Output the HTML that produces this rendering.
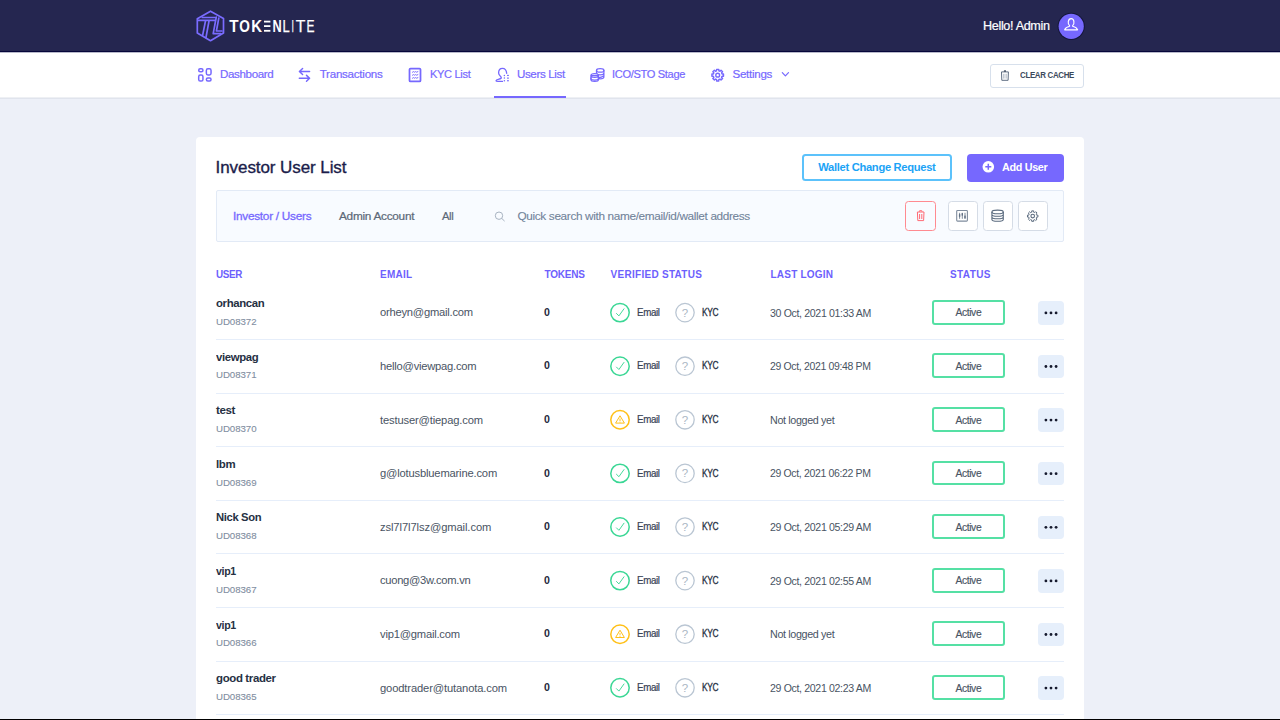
<!DOCTYPE html>
<html><head><meta charset="utf-8">
<style>
*{box-sizing:border-box;margin:0;padding:0}
html,body{width:1280px;height:720px;overflow:hidden}
body{font-family:"Liberation Sans",sans-serif;background:#edf0f8;position:relative}
.t{position:absolute;white-space:nowrap}
.b{position:absolute}
svg{position:absolute;overflow:visible}
</style></head>
<body>
<!-- topbar -->
<div class="b" style="left:0;top:0;width:1280px;height:51px;background:#252650"></div>
<div class="b" style="left:0;top:51px;width:1280px;height:1px;background:#06063a"></div>
<div class="b" style="left:0;top:52px;width:1280px;height:1px;background:#b9bacb"></div>
<!-- logo -->
<svg style="left:0;top:0" width="1280" height="52" viewBox="0 0 1280 52">
  <g fill="none" stroke="#7a6cff" stroke-width="1.7" stroke-linejoin="round" stroke-linecap="round">
    <path d="M210.5 11.2 L223.5 18.6 L223.5 33 L210.5 40.7 L197.3 33 L197.3 18.7 Z"/>
    <path d="M202.3 17.5 L215.2 17.5 M197.8 20.4 L215 20.4"/>
    <path d="M205.5 21 L202.6 35.4 M209 21 L206 37.4"/>
    <path d="M216.3 17 L213.2 33.6 L220.8 33.6 M218.8 18.2 L216.4 31 L222 31"/>
  </g>
  <g font-family="Liberation Sans" font-weight="700" font-size="16" fill="#fff">
    <text x="229.2" y="31.6" textLength="9.3" lengthAdjust="spacingAndGlyphs">T</text><text x="239.3" y="31.6" textLength="10.6" lengthAdjust="spacingAndGlyphs">O</text><text x="251.2" y="31.6" textLength="10.8" lengthAdjust="spacingAndGlyphs">K</text><text x="272.6" y="31.6" textLength="9.2" lengthAdjust="spacingAndGlyphs">N</text>
  </g>
  <g fill="#fff"><rect x="264" y="20.7" width="6.4" height="1.8"/><rect x="264" y="25.2" width="6.4" height="1.8"/><rect x="264" y="29.9" width="6.4" height="1.8"/></g>
  <g font-family="Liberation Sans" font-weight="400" font-size="16" fill="#fff" stroke="#fff" stroke-width="0.25">
    <text x="282.6" y="31.6" textLength="7.2" lengthAdjust="spacingAndGlyphs">L</text><text x="291.4" y="31.6" textLength="2.4" lengthAdjust="spacingAndGlyphs">I</text><text x="295.8" y="31.6" textLength="9.6" lengthAdjust="spacingAndGlyphs">T</text><text x="306.4" y="31.6" textLength="8" lengthAdjust="spacingAndGlyphs">E</text>
  </g>
  <!-- avatar -->
  <circle cx="1071.2" cy="26.3" r="13.6" fill="#14153c"/>
  <circle cx="1071.2" cy="26.3" r="12.6" fill="#7668fe"/>
  <g fill="none" stroke="#fff" stroke-width="1.15" stroke-linejoin="round">
    <path d="M1069.6 25.6 C1068.2 24.4 1068.1 22.8 1068.3 21.6 C1068.6 19.5 1069.8 18.6 1071.1 18.6 C1072.5 18.6 1073.7 19.5 1073.9 21.6 C1074.1 22.8 1074 24.4 1072.6 25.6 L1072.6 26.3 C1074.8 26.9 1076.9 27.8 1077.6 29.8 L1064.7 29.8 C1065.4 27.8 1067.4 26.9 1069.6 26.3 Z"/>
  </g>
</svg>
<!-- nav -->
<div class="b" style="left:0;top:53px;width:1280px;height:44px;background:#fff"></div>
<div class="b" style="left:0;top:97px;width:1280px;height:1px;background:#eef0f4"></div>
<div class="b" style="left:0;top:98px;width:1280px;height:1px;background:#e0e4ed"></div>
<div class="b" style="left:494px;top:95.8px;width:72px;height:2px;background:#7668fe"></div>
<svg style="left:0;top:0" width="1280" height="100" viewBox="0 0 1280 100">
  <g fill="none" stroke="#7668fe" stroke-width="1.75" stroke-linecap="round" stroke-linejoin="round">
    <!-- dashboard -->
    <g stroke-width="1.5">
    <rect x="198.7" y="68.85" width="4.25" height="3" rx="1.5"/>
    <rect x="206.35" y="68.85" width="4.7" height="6.1" rx="1.6"/>
    <rect x="198.7" y="75.05" width="4.25" height="6" rx="1.6"/>
    <rect x="206.35" y="78.05" width="4.7" height="3" rx="1.5"/>
    </g>
    <!-- transactions -->
    <g stroke-width="1.45">
    <path d="M309.6 71.55 L299.6 71.55 M302.6 68.5 L299.4 71.55 L302.6 74.6"/>
    <path d="M299.3 78.3 L309.4 78.3 M306.5 75.35 L309.6 78.3 L306.5 81.3"/>
    </g>
    <!-- kyc list -->
    <rect x="409.5" y="68.6" width="11" height="12.8" rx="1"/>
    <path d="M412.5 72.2 l1 -0.6 l1 0.6 l1 -0.6 l1.2 0.6 l1.2 -0.6" stroke-width="1"/>
    <path d="M412.5 75.2 l1 -0.6 l1 0.6 l1 -0.6 l1.2 0.6 l1.2 -0.6" stroke-width="1"/>
    <path d="M412.5 78.2 l1 -0.6 l1 0.6 l1 -0.6 l1.2 0.6 l1.2 -0.6" stroke-width="1"/>
    <!-- users list -->
    <path d="M506.7 73.3 C506.4 70.3 504.8 68.3 502.5 68.3 C499.8 68.3 498.6 70.8 498.6 73 C498.6 75 500.3 76.1 501.2 77.2 C501.8 78.3 500.5 78.7 499 79.1 C497.2 79.6 496 80.1 496 80.8 C496.1 81.3 497 81.4 498 81.4 L502.5 81.4" stroke-width="1.3"/>
    <g stroke="none" fill="#7668fe">
      <circle cx="504.4" cy="75.4" r="0.75"/><circle cx="504.4" cy="78.1" r="0.75"/><circle cx="504.4" cy="80.75" r="0.75"/>
      <rect x="507" y="74.85" width="1.9" height="1.1"/><rect x="507" y="77.55" width="1.9" height="1.1"/><rect x="507" y="80.2" width="1.9" height="1.1"/>
    </g>
    <!-- ICO coins -->
    <g stroke-width="1.25">
    <ellipse cx="600.2" cy="70.4" rx="3.7" ry="1.8"/>
    <path d="M596.5 70.4 L596.5 77 C596.5 78 598 78.8 600.2 78.8 C602.4 78.8 603.9 78 603.9 77 L603.9 70.4 M596.5 73.1 C596.5 74.1 598 74.9 600.2 74.9 C602.4 74.9 603.9 74.1 603.9 73.1 M598.5 77.6 C599.5 77.7 601 77.7 603.9 75.8"/>
    <path d="M590.9 75.5 L590.9 79.4 C590.9 80.5 592.5 81.3 594.7 81.3 C596.9 81.3 598.5 80.5 598.5 79.4 L598.5 75.5 C598.5 74.4 596.9 73.6 594.7 73.6 C592.5 73.6 590.9 74.4 590.9 75.5 C590.9 76.6 592.5 77.4 594.7 77.4 C596.9 77.4 598.5 76.6 598.5 75.5 Z" fill="#fff"/>
    <path d="M590.9 78.2 C590.9 79.2 592.5 80 594.7 80 C596.9 80 598.5 79.2 598.5 78.2"/>
    </g>
    <!-- settings gear -->
    <path d="M721.86 73.43 L722.06 74.03 L723.50 74.04 L723.50 76.26 L722.06 76.27 L721.86 76.87 L721.57 77.44 L722.58 78.47 L721.02 80.03 L719.99 79.02 L719.42 79.31 L718.82 79.51 L718.81 80.95 L716.59 80.95 L716.58 79.51 L715.98 79.31 L715.41 79.02 L714.38 80.03 L712.82 78.47 L713.83 77.44 L713.54 76.87 L713.34 76.27 L711.90 76.26 L711.90 74.04 L713.34 74.03 L713.54 73.43 L713.83 72.86 L712.82 71.83 L714.38 70.27 L715.41 71.28 L715.98 70.99 L716.58 70.79 L716.59 69.35 L718.81 69.35 L718.82 70.79 L719.42 70.99 L719.99 71.28 L721.02 70.27 L722.58 71.83 L721.57 72.86 Z" stroke-width="1.4"/>
    <circle cx="717.7" cy="75.15" r="1.9" stroke-width="1.4"/>
    <!-- chevron -->
    <path d="M782.3 72.6 L785.4 75.9 L788.5 72.6" stroke-width="1.2"/>
  </g>
</svg>
<!-- clear cache btn -->
<div class="b" style="left:990px;top:64px;width:94px;height:23.5px;border:1px solid #d7e0ec;border-radius:3px;background:#fff"></div>
<svg style="left:0;top:0" width="1280" height="100">
  <g fill="none" stroke="#5e6d82" stroke-width="1">
    <path d="M1001.5 71.9 L1008.4 71.9 L1008.1 80.3 L1001.8 80.3 Z" stroke-linejoin="round"/>
    <path d="M1003.9 71 L1006 71" stroke-width="1.2" stroke="#26334a"/>
    <path d="M1003.5 73.8 L1003.5 78.6 M1004.95 73.8 L1004.95 78.6 M1006.4 73.8 L1006.4 78.6" stroke="#9aa6b6" stroke-width="0.6"/>
  </g>
</svg>
<!-- card -->
<div class="b" style="left:196px;top:137px;width:888px;height:620px;background:#fff;border-radius:4px"></div>
<!-- wallet btn -->
<div class="b" style="left:802px;top:153.8px;width:150px;height:27.7px;border:2px solid #5cc2fb;border-radius:3.5px;background:#fff"></div>
<!-- add user btn -->
<div class="b" style="left:967px;top:153.5px;width:97px;height:28px;border-radius:4px;background:#7668fe"></div>
<svg style="left:0;top:0" width="1280" height="200">
  <circle cx="988.3" cy="166.8" r="5.8" fill="#fff"/>
  <path d="M988.3 163.8 L988.3 169.8 M985.3 166.8 L991.3 166.8" stroke="#7668fe" stroke-width="1.5"/>
</svg>
<!-- filter bar -->
<div class="b" style="left:216px;top:190px;width:848px;height:52px;border:1px solid #e2eaf6;border-radius:2px;background:#f8fbff"></div>
<svg style="left:0;top:0" width="1280" height="260">
  <g fill="none" stroke="#a3afbe" stroke-width="0.95">
    <circle cx="499" cy="215.7" r="3.7"/>
    <path d="M501.7 218.4 L504.6 221.1"/>
  </g>
</svg>
<div class="b" style="left:905.3px;top:201.3px;width:30.5px;height:29.5px;border:1.6px solid #ff8a90;border-radius:3.5px"></div>
<div class="b" style="left:948px;top:201.3px;width:29.5px;height:29.5px;border:1.5px solid #d5dce6;border-radius:3.5px;background:#fff"></div>
<div class="b" style="left:983px;top:201.3px;width:29.5px;height:29.5px;border:1.5px solid #d5dce6;border-radius:3.5px;background:#fff"></div>
<div class="b" style="left:1018px;top:201.3px;width:29.5px;height:29.5px;border:1.5px solid #d5dce6;border-radius:3.5px;background:#fff"></div>
<svg style="left:0;top:0" width="1280" height="260">
  <g fill="none" stroke="#ff6a75" stroke-width="1">
    <path d="M917.4 212 L924 212 L923.6 220.6 L917.8 220.6 Z"/>
    <path d="M919.3 211.8 L919.6 210.7 L921.8 210.7 L922.1 211.8"/>
    <path d="M919.6 214 L919.6 219 M921.8 214 L921.8 219"/>
  </g>
  <g fill="none" stroke="#5a6a7e" stroke-width="1.1">
    <rect x="956.7" y="210.5" width="10.7" height="10.6" rx="0.8" stroke="#7f8c9d" stroke-width="1.1"/>
    <path d="M959.6 212.8 L959.6 218.8 M962.3 212.8 L962.3 218.8 M965 212.8 L965 218.8" stroke="#5f6e82" stroke-width="0.8"/>
    <g fill="#5f6e82" stroke="none"><rect x="958.9" y="214.2" width="1.4" height="2.6"/><rect x="961.6" y="213.2" width="1.4" height="2.4"/><rect x="964.3" y="215.6" width="1.4" height="2.8"/></g>
    <ellipse cx="997.6" cy="211.9" rx="5.7" ry="1.8"/>
    <path d="M991.9 211.9 L991.9 219.4 C991.9 220.4 994.4 221.2 997.6 221.2 C1000.8 221.2 1003.3 220.4 1003.3 219.4 L1003.3 211.9 M991.9 214.4 C991.9 215.4 994.4 216.2 997.6 216.2 C1000.8 216.2 1003.3 215.4 1003.3 214.4 M991.9 216.9 C991.9 217.9 994.4 218.7 997.6 218.7 C1000.8 218.7 1003.3 217.9 1003.3 216.9"/>
    <path d="M1036.40 214.57 L1036.57 215.11 L1037.91 215.11 L1037.91 217.09 L1036.57 217.09 L1036.40 217.63 L1036.14 218.14 L1037.08 219.08 L1035.68 220.48 L1034.74 219.54 L1034.23 219.80 L1033.69 219.97 L1033.69 221.31 L1031.71 221.31 L1031.71 219.97 L1031.17 219.80 L1030.66 219.54 L1029.72 220.48 L1028.32 219.08 L1029.26 218.14 L1029.00 217.63 L1028.83 217.09 L1027.49 217.09 L1027.49 215.11 L1028.83 215.11 L1029.00 214.57 L1029.26 214.06 L1028.32 213.12 L1029.72 211.72 L1030.66 212.66 L1031.17 212.40 L1031.71 212.23 L1031.71 210.89 L1033.69 210.89 L1033.69 212.23 L1034.23 212.40 L1034.74 212.66 L1035.68 211.72 L1037.08 213.12 L1036.14 214.06 Z" stroke-width="1"/>
    <circle cx="1032.7" cy="216.1" r="1.8"/>
  </g>
</svg>
<div class="b" style="left:216px;top:338.90px;width:848px;height:1px;background:#e6eefa"></div>
<div class="b" style="left:931.8px;top:299.80px;width:72.9px;height:24.9px;border:2px solid #55e0a4;border-radius:3px"></div>
<div class="b" style="left:1038.4px;top:301.20px;width:25.4px;height:23.4px;border-radius:4px;background:#e6effb"></div>
<svg style="left:0;top:0" width="1280" height="720"><circle cx="620" cy="312.60" r="9.2" fill="none" stroke="#3bd795" stroke-width="1.5"/><path d="M616.2 313.20 L618.9 315.90 L624.2 308.50" fill="none" stroke="#3bd795" stroke-width="0.95"/><circle cx="685" cy="312.60" r="9.2" fill="none" stroke="#bac6d3" stroke-width="1.3"/><text x="685" y="316.60" text-anchor="middle" font-family="Liberation Sans" font-size="11.5" fill="#aab6c4">?</text><circle cx="1045.9" cy="312.90" r="1.4" fill="#161a2e"/><circle cx="1051.0" cy="312.90" r="1.4" fill="#161a2e"/><circle cx="1056.1" cy="312.90" r="1.4" fill="#161a2e"/></svg>
<div class="b" style="left:216px;top:392.50px;width:848px;height:1px;background:#e6eefa"></div>
<div class="b" style="left:931.8px;top:353.40px;width:72.9px;height:24.9px;border:2px solid #55e0a4;border-radius:3px"></div>
<div class="b" style="left:1038.4px;top:354.80px;width:25.4px;height:23.4px;border-radius:4px;background:#e6effb"></div>
<svg style="left:0;top:0" width="1280" height="720"><circle cx="620" cy="366.20" r="9.2" fill="none" stroke="#3bd795" stroke-width="1.5"/><path d="M616.2 366.80 L618.9 369.50 L624.2 362.10" fill="none" stroke="#3bd795" stroke-width="0.95"/><circle cx="685" cy="366.20" r="9.2" fill="none" stroke="#bac6d3" stroke-width="1.3"/><text x="685" y="370.20" text-anchor="middle" font-family="Liberation Sans" font-size="11.5" fill="#aab6c4">?</text><circle cx="1045.9" cy="366.50" r="1.4" fill="#161a2e"/><circle cx="1051.0" cy="366.50" r="1.4" fill="#161a2e"/><circle cx="1056.1" cy="366.50" r="1.4" fill="#161a2e"/></svg>
<div class="b" style="left:216px;top:446.10px;width:848px;height:1px;background:#e6eefa"></div>
<div class="b" style="left:931.8px;top:407.00px;width:72.9px;height:24.9px;border:2px solid #55e0a4;border-radius:3px"></div>
<div class="b" style="left:1038.4px;top:408.40px;width:25.4px;height:23.4px;border-radius:4px;background:#e6effb"></div>
<svg style="left:0;top:0" width="1280" height="720"><circle cx="620" cy="419.80" r="9.2" fill="none" stroke="#ffc018" stroke-width="1.5"/><path d="M620 415.80 L624.4 423.10 L615.6 423.10 Z" fill="none" stroke="#ffc018" stroke-width="1" stroke-linejoin="round"/><path d="M620 418.50 L620 421.00" stroke="#ffc018" stroke-width="0.9"/><circle cx="620" cy="422.10" r="0.5" fill="#ffc018"/><circle cx="685" cy="419.80" r="9.2" fill="none" stroke="#bac6d3" stroke-width="1.3"/><text x="685" y="423.80" text-anchor="middle" font-family="Liberation Sans" font-size="11.5" fill="#aab6c4">?</text><circle cx="1045.9" cy="420.10" r="1.4" fill="#161a2e"/><circle cx="1051.0" cy="420.10" r="1.4" fill="#161a2e"/><circle cx="1056.1" cy="420.10" r="1.4" fill="#161a2e"/></svg>
<div class="b" style="left:216px;top:499.70px;width:848px;height:1px;background:#e6eefa"></div>
<div class="b" style="left:931.8px;top:460.60px;width:72.9px;height:24.9px;border:2px solid #55e0a4;border-radius:3px"></div>
<div class="b" style="left:1038.4px;top:462.00px;width:25.4px;height:23.4px;border-radius:4px;background:#e6effb"></div>
<svg style="left:0;top:0" width="1280" height="720"><circle cx="620" cy="473.40" r="9.2" fill="none" stroke="#3bd795" stroke-width="1.5"/><path d="M616.2 474.00 L618.9 476.70 L624.2 469.30" fill="none" stroke="#3bd795" stroke-width="0.95"/><circle cx="685" cy="473.40" r="9.2" fill="none" stroke="#bac6d3" stroke-width="1.3"/><text x="685" y="477.40" text-anchor="middle" font-family="Liberation Sans" font-size="11.5" fill="#aab6c4">?</text><circle cx="1045.9" cy="473.70" r="1.4" fill="#161a2e"/><circle cx="1051.0" cy="473.70" r="1.4" fill="#161a2e"/><circle cx="1056.1" cy="473.70" r="1.4" fill="#161a2e"/></svg>
<div class="b" style="left:216px;top:553.30px;width:848px;height:1px;background:#e6eefa"></div>
<div class="b" style="left:931.8px;top:514.20px;width:72.9px;height:24.9px;border:2px solid #55e0a4;border-radius:3px"></div>
<div class="b" style="left:1038.4px;top:515.60px;width:25.4px;height:23.4px;border-radius:4px;background:#e6effb"></div>
<svg style="left:0;top:0" width="1280" height="720"><circle cx="620" cy="527.00" r="9.2" fill="none" stroke="#3bd795" stroke-width="1.5"/><path d="M616.2 527.60 L618.9 530.30 L624.2 522.90" fill="none" stroke="#3bd795" stroke-width="0.95"/><circle cx="685" cy="527.00" r="9.2" fill="none" stroke="#bac6d3" stroke-width="1.3"/><text x="685" y="531.00" text-anchor="middle" font-family="Liberation Sans" font-size="11.5" fill="#aab6c4">?</text><circle cx="1045.9" cy="527.30" r="1.4" fill="#161a2e"/><circle cx="1051.0" cy="527.30" r="1.4" fill="#161a2e"/><circle cx="1056.1" cy="527.30" r="1.4" fill="#161a2e"/></svg>
<div class="b" style="left:216px;top:606.90px;width:848px;height:1px;background:#e6eefa"></div>
<div class="b" style="left:931.8px;top:567.80px;width:72.9px;height:24.9px;border:2px solid #55e0a4;border-radius:3px"></div>
<div class="b" style="left:1038.4px;top:569.20px;width:25.4px;height:23.4px;border-radius:4px;background:#e6effb"></div>
<svg style="left:0;top:0" width="1280" height="720"><circle cx="620" cy="580.60" r="9.2" fill="none" stroke="#3bd795" stroke-width="1.5"/><path d="M616.2 581.20 L618.9 583.90 L624.2 576.50" fill="none" stroke="#3bd795" stroke-width="0.95"/><circle cx="685" cy="580.60" r="9.2" fill="none" stroke="#bac6d3" stroke-width="1.3"/><text x="685" y="584.60" text-anchor="middle" font-family="Liberation Sans" font-size="11.5" fill="#aab6c4">?</text><circle cx="1045.9" cy="580.90" r="1.4" fill="#161a2e"/><circle cx="1051.0" cy="580.90" r="1.4" fill="#161a2e"/><circle cx="1056.1" cy="580.90" r="1.4" fill="#161a2e"/></svg>
<div class="b" style="left:216px;top:660.50px;width:848px;height:1px;background:#e6eefa"></div>
<div class="b" style="left:931.8px;top:621.40px;width:72.9px;height:24.9px;border:2px solid #55e0a4;border-radius:3px"></div>
<div class="b" style="left:1038.4px;top:622.80px;width:25.4px;height:23.4px;border-radius:4px;background:#e6effb"></div>
<svg style="left:0;top:0" width="1280" height="720"><circle cx="620" cy="634.20" r="9.2" fill="none" stroke="#ffc018" stroke-width="1.5"/><path d="M620 630.20 L624.4 637.50 L615.6 637.50 Z" fill="none" stroke="#ffc018" stroke-width="1" stroke-linejoin="round"/><path d="M620 632.90 L620 635.40" stroke="#ffc018" stroke-width="0.9"/><circle cx="620" cy="636.50" r="0.5" fill="#ffc018"/><circle cx="685" cy="634.20" r="9.2" fill="none" stroke="#bac6d3" stroke-width="1.3"/><text x="685" y="638.20" text-anchor="middle" font-family="Liberation Sans" font-size="11.5" fill="#aab6c4">?</text><circle cx="1045.9" cy="634.50" r="1.4" fill="#161a2e"/><circle cx="1051.0" cy="634.50" r="1.4" fill="#161a2e"/><circle cx="1056.1" cy="634.50" r="1.4" fill="#161a2e"/></svg>
<div class="b" style="left:216px;top:714.10px;width:848px;height:1px;background:#e6eefa"></div>
<div class="b" style="left:931.8px;top:675.00px;width:72.9px;height:24.9px;border:2px solid #55e0a4;border-radius:3px"></div>
<div class="b" style="left:1038.4px;top:676.40px;width:25.4px;height:23.4px;border-radius:4px;background:#e6effb"></div>
<svg style="left:0;top:0" width="1280" height="720"><circle cx="620" cy="687.80" r="9.2" fill="none" stroke="#3bd795" stroke-width="1.5"/><path d="M616.2 688.40 L618.9 691.10 L624.2 683.70" fill="none" stroke="#3bd795" stroke-width="0.95"/><circle cx="685" cy="687.80" r="9.2" fill="none" stroke="#bac6d3" stroke-width="1.3"/><text x="685" y="691.80" text-anchor="middle" font-family="Liberation Sans" font-size="11.5" fill="#aab6c4">?</text><circle cx="1045.9" cy="688.10" r="1.4" fill="#161a2e"/><circle cx="1051.0" cy="688.10" r="1.4" fill="#161a2e"/><circle cx="1056.1" cy="688.10" r="1.4" fill="#161a2e"/></svg>
<div class="t" style="left:982.5px;top:19.00px;color:#ffffff;font-size:13px;line-height:13px;font-weight:400;letter-spacing:-0.350px;transform:scaleX(0.9690);transform-origin:0 0;-webkit-text-stroke:0.2px #fff">Hello! Admin</div>
<div class="t" style="left:219.7px;top:68.00px;color:#7668fe;font-size:11.6px;line-height:11.6px;font-weight:400;letter-spacing:-0.350px;transform:scaleX(0.9964);transform-origin:0 0;-webkit-text-stroke:0.2px #7668fe">Dashboard</div>
<div class="t" style="left:319.7px;top:68.00px;color:#7668fe;font-size:11.6px;line-height:11.6px;font-weight:400;letter-spacing:-0.255px;-webkit-text-stroke:0.2px #7668fe">Transactions</div>
<div class="t" style="left:429.5px;top:68.00px;color:#7668fe;font-size:11.6px;line-height:11.6px;font-weight:400;letter-spacing:-0.350px;transform:scaleX(0.9553);transform-origin:0 0;-webkit-text-stroke:0.2px #7668fe">KYC List</div>
<div class="t" style="left:516.9px;top:68.00px;color:#7668fe;font-size:11.6px;line-height:11.6px;font-weight:400;letter-spacing:-0.356px;-webkit-text-stroke:0.2px #7668fe">Users List</div>
<div class="t" style="left:611.9px;top:68.00px;color:#7668fe;font-size:11.6px;line-height:11.6px;font-weight:400;letter-spacing:-0.350px;transform:scaleX(0.9558);transform-origin:0 0;-webkit-text-stroke:0.2px #7668fe">ICO/STO Stage</div>
<div class="t" style="left:732.5px;top:68.00px;color:#7668fe;font-size:11.6px;line-height:11.6px;font-weight:400;letter-spacing:-0.286px;-webkit-text-stroke:0.2px #7668fe">Settings</div>
<div class="t" style="left:1019.9px;top:71.00px;color:#3c4a5c;font-size:8.6px;line-height:8.6px;font-weight:700;letter-spacing:-0.350px;transform:scaleX(0.9211);transform-origin:0 0;">CLEAR CACHE</div>
<div class="t" style="left:215.6px;top:159.00px;color:#1b1d4b;font-size:17px;line-height:17px;font-weight:400;letter-spacing:-0.082px;-webkit-text-stroke:0.35px #1b1d4b">Investor User List</div>
<div class="t" style="left:818.3px;top:162.00px;color:#1ba3f6;font-size:11.2px;line-height:11.2px;font-weight:700;letter-spacing:-0.320px;">Wallet Change Request</div>
<div class="t" style="left:1002.3px;top:162.00px;color:#ffffff;font-size:11.2px;line-height:11.2px;font-weight:700;letter-spacing:-0.350px;transform:scaleX(0.9675);transform-origin:0 0;">Add User</div>
<div class="t" style="left:233.0px;top:211.00px;color:#7668fe;font-size:11.8px;line-height:11.8px;font-weight:400;letter-spacing:-0.267px;-webkit-text-stroke:0.3px #7668fe">Investor / Users</div>
<div class="t" style="left:339.0px;top:211.00px;color:#5c6878;font-size:11.8px;line-height:11.8px;font-weight:400;letter-spacing:-0.267px;-webkit-text-stroke:0.22px #5c6878">Admin Account</div>
<div class="t" style="left:441.7px;top:211.00px;color:#5c6878;font-size:11.8px;line-height:11.8px;font-weight:400;letter-spacing:-0.350px;transform:scaleX(0.9476);transform-origin:0 0;-webkit-text-stroke:0.22px #5c6878">All</div>
<div class="t" style="left:517.5px;top:211.00px;color:#71839a;font-size:11.8px;line-height:11.8px;font-weight:400;letter-spacing:-0.350px;-webkit-text-stroke:0.1px #71839a">Quick search with name/email/id/wallet address</div>
<div class="t" style="left:216.0px;top:270.00px;color:#6d5ffd;font-size:10px;line-height:10px;font-weight:700;letter-spacing:-0.350px;transform:scaleX(0.9871);transform-origin:0 0;">USER</div>
<div class="t" style="left:380.0px;top:270.00px;color:#6d5ffd;font-size:10px;line-height:10px;font-weight:700;letter-spacing:0.250px;">EMAIL</div>
<div class="t" style="left:544.5px;top:270.00px;color:#6d5ffd;font-size:10px;line-height:10px;font-weight:700;letter-spacing:-0.200px;">TOKENS</div>
<div class="t" style="left:610.5px;top:270.00px;color:#6d5ffd;font-size:10px;line-height:10px;font-weight:700;letter-spacing:0.286px;">VERIFIED STATUS</div>
<div class="t" style="left:770.5px;top:270.00px;color:#6d5ffd;font-size:10px;line-height:10px;font-weight:700;letter-spacing:0.222px;">LAST LOGIN</div>
<div class="t" style="left:950.0px;top:270.00px;color:#6d5ffd;font-size:10px;line-height:10px;font-weight:700;letter-spacing:0.400px;">STATUS</div>
<div class="t" style="left:216.0px;top:297.00px;color:#263043;font-size:11.6px;line-height:11.6px;font-weight:700;letter-spacing:-0.350px;transform:scaleX(0.9809);transform-origin:0 0;">orhancan</div>
<div class="t" style="left:216.0px;top:317.00px;color:#7f8ea1;font-size:9.7px;line-height:9.7px;font-weight:400;letter-spacing:-0.067px;-webkit-text-stroke:0.1px #7f8ea1">UD08372</div>
<div class="t" style="left:380.0px;top:307.00px;color:#495463;font-size:11.2px;line-height:11.2px;font-weight:400;letter-spacing:-0.227px;">orheyn@gmail.com</div>
<div class="t" style="left:544.0px;top:307.00px;color:#1f2940;font-size:10.6px;line-height:10.6px;font-weight:700;letter-spacing:0.000px;">0</div>
<div class="t" style="left:637.0px;top:308.00px;color:#384254;font-size:10px;line-height:10px;font-weight:400;letter-spacing:-0.350px;transform:scaleX(0.9750);transform-origin:0 0;-webkit-text-stroke:0.2px #384254">Email</div>
<div class="t" style="left:701.9px;top:308.00px;color:#263043;font-size:10px;line-height:10px;font-weight:400;letter-spacing:-0.350px;transform:scaleX(0.8381);transform-origin:0 0;-webkit-text-stroke:0.3px #263043">KYC</div>
<div class="t" style="left:770.0px;top:308.00px;color:#495463;font-size:10.7px;line-height:10.7px;font-weight:400;letter-spacing:-0.350px;transform:scaleX(0.9902);transform-origin:0 0;">30 Oct, 2021 01:33 AM</div>
<div class="t" style="left:955.4px;top:308.00px;color:#495463;font-size:10.3px;line-height:10.3px;font-weight:400;letter-spacing:-0.360px;-webkit-text-stroke:0.15px #495463">Active</div>
<div class="t" style="left:216.0px;top:351.00px;color:#263043;font-size:11.6px;line-height:11.6px;font-weight:700;letter-spacing:-0.350px;transform:scaleX(0.9795);transform-origin:0 0;">viewpag</div>
<div class="t" style="left:216.0px;top:370.00px;color:#7f8ea1;font-size:9.7px;line-height:9.7px;font-weight:400;letter-spacing:-0.067px;-webkit-text-stroke:0.1px #7f8ea1">UD08371</div>
<div class="t" style="left:380.0px;top:361.00px;color:#495463;font-size:11.2px;line-height:11.2px;font-weight:400;letter-spacing:-0.225px;">hello@viewpag.com</div>
<div class="t" style="left:544.0px;top:360.00px;color:#1f2940;font-size:10.6px;line-height:10.6px;font-weight:700;letter-spacing:0.000px;">0</div>
<div class="t" style="left:637.0px;top:361.00px;color:#384254;font-size:10px;line-height:10px;font-weight:400;letter-spacing:-0.350px;transform:scaleX(0.9750);transform-origin:0 0;-webkit-text-stroke:0.2px #384254">Email</div>
<div class="t" style="left:701.9px;top:361.00px;color:#263043;font-size:10px;line-height:10px;font-weight:400;letter-spacing:-0.350px;transform:scaleX(0.8381);transform-origin:0 0;-webkit-text-stroke:0.3px #263043">KYC</div>
<div class="t" style="left:770.0px;top:361.00px;color:#495463;font-size:10.7px;line-height:10.7px;font-weight:400;letter-spacing:-0.350px;transform:scaleX(0.9806);transform-origin:0 0;">29 Oct, 2021 09:48 PM</div>
<div class="t" style="left:955.4px;top:362.00px;color:#495463;font-size:10.3px;line-height:10.3px;font-weight:400;letter-spacing:-0.360px;-webkit-text-stroke:0.15px #495463">Active</div>
<div class="t" style="left:216.0px;top:404.00px;color:#263043;font-size:11.6px;line-height:11.6px;font-weight:700;letter-spacing:-0.400px;">test</div>
<div class="t" style="left:216.0px;top:424.00px;color:#7f8ea1;font-size:9.7px;line-height:9.7px;font-weight:400;letter-spacing:-0.067px;-webkit-text-stroke:0.1px #7f8ea1">UD08370</div>
<div class="t" style="left:380.0px;top:415.00px;color:#495463;font-size:11.2px;line-height:11.2px;font-weight:400;letter-spacing:-0.156px;">testuser@tiepag.com</div>
<div class="t" style="left:544.0px;top:414.00px;color:#1f2940;font-size:10.6px;line-height:10.6px;font-weight:700;letter-spacing:0.000px;">0</div>
<div class="t" style="left:637.0px;top:415.00px;color:#384254;font-size:10px;line-height:10px;font-weight:400;letter-spacing:-0.350px;transform:scaleX(0.9750);transform-origin:0 0;-webkit-text-stroke:0.2px #384254">Email</div>
<div class="t" style="left:701.9px;top:415.00px;color:#263043;font-size:10px;line-height:10px;font-weight:400;letter-spacing:-0.350px;transform:scaleX(0.8381);transform-origin:0 0;-webkit-text-stroke:0.3px #263043">KYC</div>
<div class="t" style="left:770.0px;top:415.00px;color:#495463;font-size:10.7px;line-height:10.7px;font-weight:400;letter-spacing:-0.350px;transform:scaleX(1.0054);transform-origin:0 0;">Not logged yet</div>
<div class="t" style="left:955.4px;top:416.00px;color:#495463;font-size:10.3px;line-height:10.3px;font-weight:400;letter-spacing:-0.360px;-webkit-text-stroke:0.15px #495463">Active</div>
<div class="t" style="left:216.0px;top:458.00px;color:#263043;font-size:11.6px;line-height:11.6px;font-weight:700;letter-spacing:-0.350px;transform:scaleX(0.9859);transform-origin:0 0;">lbm</div>
<div class="t" style="left:216.0px;top:478.00px;color:#7f8ea1;font-size:9.7px;line-height:9.7px;font-weight:400;letter-spacing:-0.067px;-webkit-text-stroke:0.1px #7f8ea1">UD08369</div>
<div class="t" style="left:380.0px;top:468.00px;color:#495463;font-size:11.2px;line-height:11.2px;font-weight:400;letter-spacing:-0.180px;">g@lotusbluemarine.com</div>
<div class="t" style="left:544.0px;top:468.00px;color:#1f2940;font-size:10.6px;line-height:10.6px;font-weight:700;letter-spacing:0.000px;">0</div>
<div class="t" style="left:637.0px;top:469.00px;color:#384254;font-size:10px;line-height:10px;font-weight:400;letter-spacing:-0.350px;transform:scaleX(0.9750);transform-origin:0 0;-webkit-text-stroke:0.2px #384254">Email</div>
<div class="t" style="left:701.9px;top:469.00px;color:#263043;font-size:10px;line-height:10px;font-weight:400;letter-spacing:-0.350px;transform:scaleX(0.8381);transform-origin:0 0;-webkit-text-stroke:0.3px #263043">KYC</div>
<div class="t" style="left:770.0px;top:468.00px;color:#495463;font-size:10.7px;line-height:10.7px;font-weight:400;letter-spacing:-0.350px;transform:scaleX(0.9806);transform-origin:0 0;">29 Oct, 2021 06:22 PM</div>
<div class="t" style="left:955.4px;top:469.00px;color:#495463;font-size:10.3px;line-height:10.3px;font-weight:400;letter-spacing:-0.360px;-webkit-text-stroke:0.15px #495463">Active</div>
<div class="t" style="left:216.0px;top:511.00px;color:#263043;font-size:11.6px;line-height:11.6px;font-weight:700;letter-spacing:-0.350px;transform:scaleX(0.9674);transform-origin:0 0;">Nick Son</div>
<div class="t" style="left:216.0px;top:531.00px;color:#7f8ea1;font-size:9.7px;line-height:9.7px;font-weight:400;letter-spacing:-0.067px;-webkit-text-stroke:0.1px #7f8ea1">UD08368</div>
<div class="t" style="left:380.0px;top:522.00px;color:#495463;font-size:11.2px;line-height:11.2px;font-weight:400;letter-spacing:-0.100px;">zsl7l7l7lsz@gmail.com</div>
<div class="t" style="left:544.0px;top:521.00px;color:#1f2940;font-size:10.6px;line-height:10.6px;font-weight:700;letter-spacing:0.000px;">0</div>
<div class="t" style="left:637.0px;top:522.00px;color:#384254;font-size:10px;line-height:10px;font-weight:400;letter-spacing:-0.350px;transform:scaleX(0.9750);transform-origin:0 0;-webkit-text-stroke:0.2px #384254">Email</div>
<div class="t" style="left:701.9px;top:522.00px;color:#263043;font-size:10px;line-height:10px;font-weight:400;letter-spacing:-0.350px;transform:scaleX(0.8381);transform-origin:0 0;-webkit-text-stroke:0.3px #263043">KYC</div>
<div class="t" style="left:770.0px;top:522.00px;color:#495463;font-size:10.7px;line-height:10.7px;font-weight:400;letter-spacing:-0.350px;transform:scaleX(0.9902);transform-origin:0 0;">29 Oct, 2021 05:29 AM</div>
<div class="t" style="left:955.4px;top:523.00px;color:#495463;font-size:10.3px;line-height:10.3px;font-weight:400;letter-spacing:-0.360px;-webkit-text-stroke:0.15px #495463">Active</div>
<div class="t" style="left:216.0px;top:565.00px;color:#263043;font-size:11.6px;line-height:11.6px;font-weight:700;letter-spacing:-0.350px;transform:scaleX(0.9150);transform-origin:0 0;">vip1</div>
<div class="t" style="left:216.0px;top:585.00px;color:#7f8ea1;font-size:9.7px;line-height:9.7px;font-weight:400;letter-spacing:-0.067px;-webkit-text-stroke:0.1px #7f8ea1">UD08367</div>
<div class="t" style="left:380.0px;top:575.00px;color:#495463;font-size:11.2px;line-height:11.2px;font-weight:400;letter-spacing:-0.286px;">cuong@3w.com.vn</div>
<div class="t" style="left:544.0px;top:575.00px;color:#1f2940;font-size:10.6px;line-height:10.6px;font-weight:700;letter-spacing:0.000px;">0</div>
<div class="t" style="left:637.0px;top:576.00px;color:#384254;font-size:10px;line-height:10px;font-weight:400;letter-spacing:-0.350px;transform:scaleX(0.9750);transform-origin:0 0;-webkit-text-stroke:0.2px #384254">Email</div>
<div class="t" style="left:701.9px;top:576.00px;color:#263043;font-size:10px;line-height:10px;font-weight:400;letter-spacing:-0.350px;transform:scaleX(0.8381);transform-origin:0 0;-webkit-text-stroke:0.3px #263043">KYC</div>
<div class="t" style="left:770.0px;top:576.00px;color:#495463;font-size:10.7px;line-height:10.7px;font-weight:400;letter-spacing:-0.350px;transform:scaleX(0.9902);transform-origin:0 0;">29 Oct, 2021 02:55 AM</div>
<div class="t" style="left:955.4px;top:576.00px;color:#495463;font-size:10.3px;line-height:10.3px;font-weight:400;letter-spacing:-0.360px;-webkit-text-stroke:0.15px #495463">Active</div>
<div class="t" style="left:216.0px;top:619.00px;color:#263043;font-size:11.6px;line-height:11.6px;font-weight:700;letter-spacing:-0.350px;transform:scaleX(0.9150);transform-origin:0 0;">vip1</div>
<div class="t" style="left:216.0px;top:638.00px;color:#7f8ea1;font-size:9.7px;line-height:9.7px;font-weight:400;letter-spacing:-0.067px;-webkit-text-stroke:0.1px #7f8ea1">UD08366</div>
<div class="t" style="left:380.0px;top:629.00px;color:#495463;font-size:11.2px;line-height:11.2px;font-weight:400;letter-spacing:-0.215px;">vip1@gmail.com</div>
<div class="t" style="left:544.0px;top:628.00px;color:#1f2940;font-size:10.6px;line-height:10.6px;font-weight:700;letter-spacing:0.000px;">0</div>
<div class="t" style="left:637.0px;top:629.00px;color:#384254;font-size:10px;line-height:10px;font-weight:400;letter-spacing:-0.350px;transform:scaleX(0.9750);transform-origin:0 0;-webkit-text-stroke:0.2px #384254">Email</div>
<div class="t" style="left:701.9px;top:629.00px;color:#263043;font-size:10px;line-height:10px;font-weight:400;letter-spacing:-0.350px;transform:scaleX(0.8381);transform-origin:0 0;-webkit-text-stroke:0.3px #263043">KYC</div>
<div class="t" style="left:770.0px;top:629.00px;color:#495463;font-size:10.7px;line-height:10.7px;font-weight:400;letter-spacing:-0.350px;transform:scaleX(1.0054);transform-origin:0 0;">Not logged yet</div>
<div class="t" style="left:955.4px;top:630.00px;color:#495463;font-size:10.3px;line-height:10.3px;font-weight:400;letter-spacing:-0.360px;-webkit-text-stroke:0.15px #495463">Active</div>
<div class="t" style="left:216.0px;top:672.00px;color:#263043;font-size:11.6px;line-height:11.6px;font-weight:700;letter-spacing:-0.350px;transform:scaleX(0.9854);transform-origin:0 0;">good trader</div>
<div class="t" style="left:216.0px;top:692.00px;color:#7f8ea1;font-size:9.7px;line-height:9.7px;font-weight:400;letter-spacing:-0.067px;-webkit-text-stroke:0.1px #7f8ea1">UD08365</div>
<div class="t" style="left:380.0px;top:683.00px;color:#495463;font-size:11.2px;line-height:11.2px;font-weight:400;letter-spacing:-0.136px;">goodtrader@tutanota.com</div>
<div class="t" style="left:544.0px;top:682.00px;color:#1f2940;font-size:10.6px;line-height:10.6px;font-weight:700;letter-spacing:0.000px;">0</div>
<div class="t" style="left:637.0px;top:683.00px;color:#384254;font-size:10px;line-height:10px;font-weight:400;letter-spacing:-0.350px;transform:scaleX(0.9750);transform-origin:0 0;-webkit-text-stroke:0.2px #384254">Email</div>
<div class="t" style="left:701.9px;top:683.00px;color:#263043;font-size:10px;line-height:10px;font-weight:400;letter-spacing:-0.350px;transform:scaleX(0.8381);transform-origin:0 0;-webkit-text-stroke:0.3px #263043">KYC</div>
<div class="t" style="left:770.0px;top:683.00px;color:#495463;font-size:10.7px;line-height:10.7px;font-weight:400;letter-spacing:-0.350px;transform:scaleX(0.9902);transform-origin:0 0;">29 Oct, 2021 02:23 AM</div>
<div class="t" style="left:955.4px;top:684.00px;color:#495463;font-size:10.3px;line-height:10.3px;font-weight:400;letter-spacing:-0.360px;-webkit-text-stroke:0.15px #495463">Active</div>
<div class="b" style="left:0;top:719px;width:1280px;height:1px;background:#000"></div>
</body></html>
